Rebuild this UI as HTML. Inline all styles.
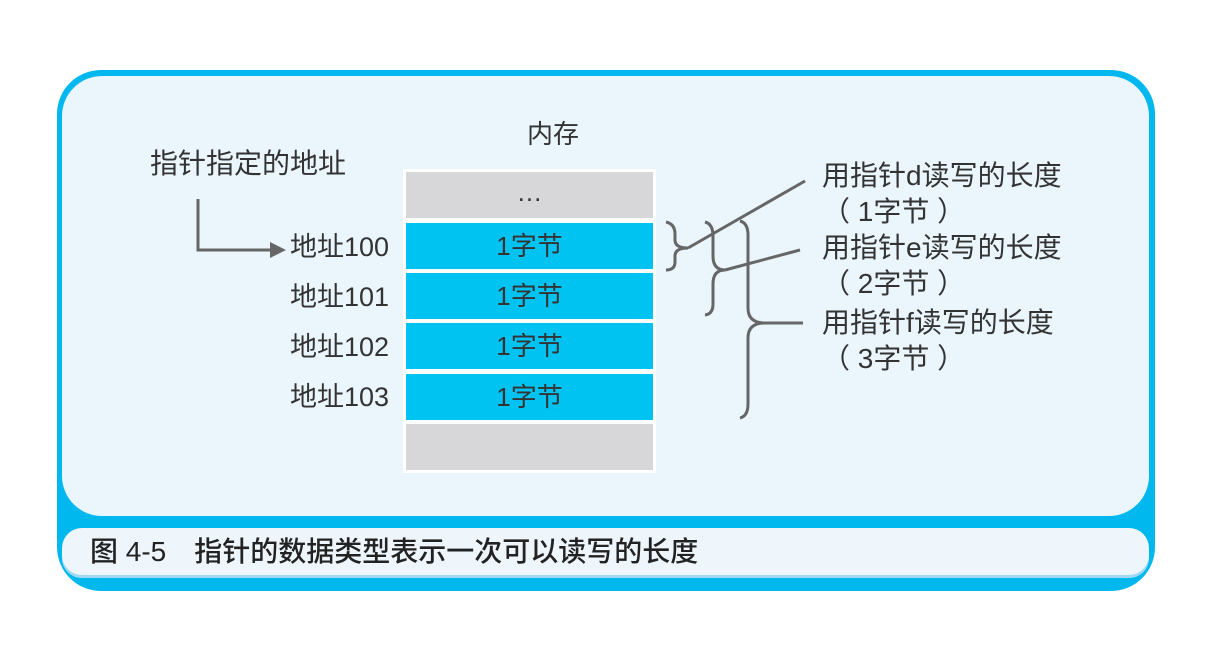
<!DOCTYPE html>
<html><head><meta charset="utf-8"><style>
body{margin:0;width:1232px;height:646px;background:#fff;position:relative;overflow:hidden;font-family:"Liberation Sans","Noto Sans CJK SC",sans-serif;color:#333}
.outer{position:absolute;left:57px;top:70px;width:1098px;height:521px;background:#00b8ee;border-radius:44px}
.inner{position:absolute;left:62px;top:76px;width:1087px;height:440px;background:#eaf5fc;border-radius:40px}
.cap{position:absolute;left:62px;top:528px;width:1087px;height:50px;background:#eef6fc;border-radius:20px;box-shadow:inset 0 -3px 0 #9fd8f3}
.cap span{position:absolute;left:28px;top:9px;font-size:28px;line-height:1.1;color:#222;font-weight:500}
.t{position:absolute;font-size:27px;white-space:nowrap;color:#333;line-height:1}
.r{font-size:28px}
.col{position:absolute;left:403px;top:169px;width:253px;height:304px;background:#fff}
.c{position:absolute;left:3px;width:247px;height:46px;text-align:center;font-size:26px;line-height:46px;color:#333}
.g{background:#d7d7d9}.b{background:#00c3f2}
</style></head><body>
<div class="outer"></div><div class="inner"></div>
<div class="cap"><span>图 4-5　指针的数据类型表示一次可以读写的长度</span></div>
<div class="t" style="left:527px;top:121px;font-size:26px">内存</div>
<div class="t" style="left:150px;top:150px;font-size:28px">指针指定的地址</div>
<div class="t" style="left:290px;top:234px">地址100</div>
<div class="t" style="left:290px;top:284px">地址101</div>
<div class="t" style="left:290px;top:334px">地址102</div>
<div class="t" style="left:290px;top:384px">地址103</div>
<div class="col">
<div class="c g" style="top:3px;line-height:40px">…</div>
<div class="c b" style="top:54px">1字节</div>
<div class="c b" style="top:104px">1字节</div>
<div class="c b" style="top:154px">1字节</div>
<div class="c b" style="top:205px">1字节</div>
<div class="c g" style="top:255px"></div>
</div>
<div class="t r" style="left:822px;top:162px">用指针d读写的长度</div>
<div class="t r" style="left:822px;top:198px">（ 1字节 ）</div>
<div class="t r" style="left:822px;top:234px">用指针e读写的长度</div>
<div class="t r" style="left:822px;top:270px">（ 2字节 ）</div>
<div class="t r" style="left:822px;top:309px">用指针f读写的长度</div>
<div class="t r" style="left:822px;top:345px">（ 3字节 ）</div>
<svg width="1232" height="646" style="position:absolute;left:0;top:0" fill="none" stroke="#666" stroke-width="3">
<path d="M198 199 V250 H272"/><path d="M270 242 L286 250 L270 258 Z" fill="#666" stroke="none"/>
<path d="M666 222 Q675 224 675 234 V240 Q675 248 688 248 Q675 248 675 256 V262 Q675 270 666 270"/>
<path d="M688 248 L805 181"/>
<path d="M705 222 Q713 224 713 236 V256 Q713 270 725 270 Q713 270 713 284 V304 Q713 314 705 315"/>
<path d="M725 270 L800 250"/>
<path d="M740 221 Q748 223 748 235 V308 Q748 323 765 323 Q748 323 748 338 V404 Q748 416 740 418"/>
<path d="M765 323 L803 323"/>
</svg>
</body></html>
